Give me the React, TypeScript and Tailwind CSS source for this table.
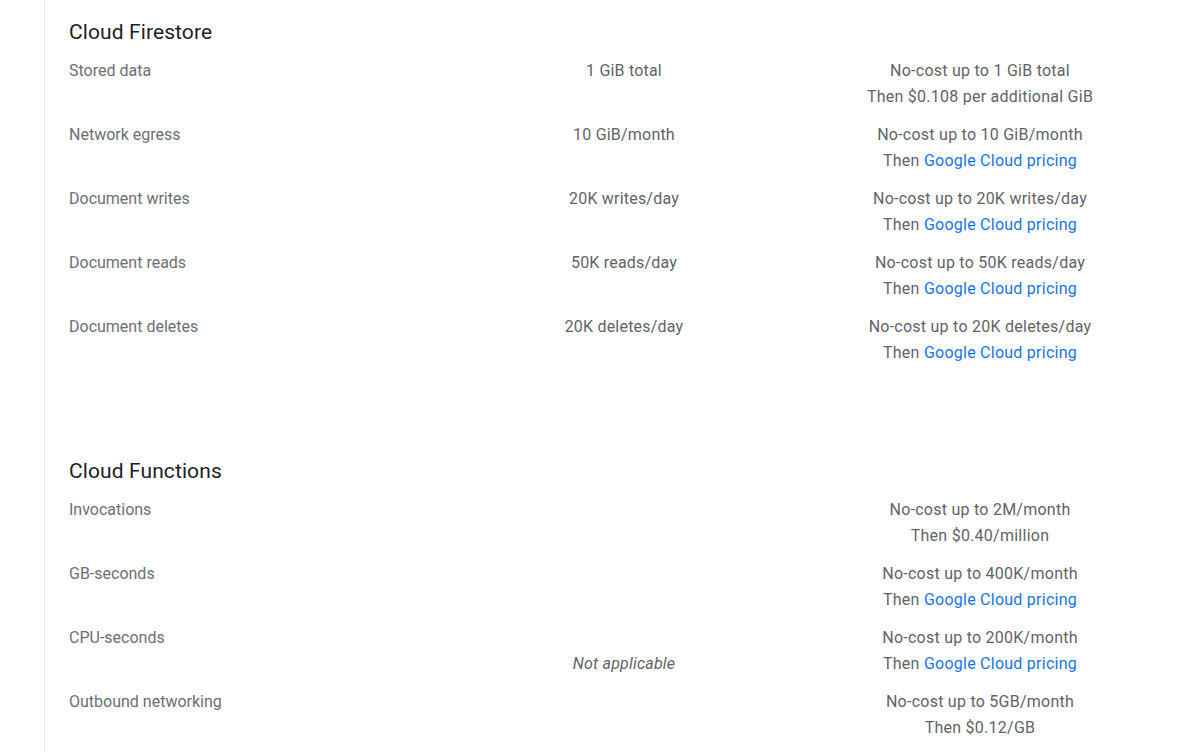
import React from "react";

const link = "text-[#1a73e8]";

type Row = { label: string; mid?: React.ReactNode; l1: string; l2: React.ReactNode };

const GCP = (
  <>
    Then <span className={link}>Google Cloud pricing</span>
  </>
);

const firestore: Row[] = [
  { label: "Stored data", mid: "1 GiB total", l1: "No-cost up to 1 GiB total", l2: "Then $0.108 per additional GiB" },
  { label: "Network egress", mid: "10 GiB/month", l1: "No-cost up to 10 GiB/month", l2: GCP },
  { label: "Document writes", mid: "20K writes/day", l1: "No-cost up to 20K writes/day", l2: GCP },
  { label: "Document reads", mid: "50K reads/day", l1: "No-cost up to 50K reads/day", l2: GCP },
  { label: "Document deletes", mid: "20K deletes/day", l1: "No-cost up to 20K deletes/day", l2: GCP },
];

const functions: Row[] = [
  { label: "Invocations", l1: "No-cost up to 2M/month", l2: "Then $0.40/million" },
  { label: "GB-seconds", l1: "No-cost up to 400K/month", l2: GCP },
  { label: "CPU-seconds", l1: "No-cost up to 200K/month", l2: GCP },
  { label: "Outbound networking", l1: "No-cost up to 5GB/month", l2: "Then $0.12/GB" },
];

function Section({ title, rows, na }: { title: string; rows: Row[]; na?: boolean }) {
  return (
    <div>
      <h2 className="text-[21px] leading-[32px] text-[#202124] font-normal tracking-[0.1px]">{title}</h2>
      <div className="mt-[4px]">
        {rows.map((r, i) => (
          <div key={r.label} className="grid grid-cols-[377px_356px_356px] py-[6px] text-[16px] leading-[26px] text-[#5f6368]">
            <div className="text-[#6b6f74]">{r.label}</div>
            <div className="text-center tracking-[0.2px]">
              {r.mid}
              {na && i === 2 ? (
                <>
                  <br />
                  <span className="italic">Not applicable</span>
                </>
              ) : null}
            </div>
            <div className="text-center tracking-[0.25px]">
              <div>{r.l1}</div>
              <div>{r.l2}</div>
            </div>
          </div>
        ))}
      </div>
    </div>
  );
}

export default function App() {
  return (
    <div className="w-[1198px] h-[752px] overflow-hidden bg-white font-['Roboto',sans-serif]">
      <div className="ml-[44px] h-full border-l border-[#e8eaed] pl-[24px] pt-[16px]">
        <Section title="Cloud Firestore" rows={firestore} />
        <div className="h-[83px]" />
        <Section title="Cloud Functions" rows={functions} na />
      </div>
    </div>
  );
}
